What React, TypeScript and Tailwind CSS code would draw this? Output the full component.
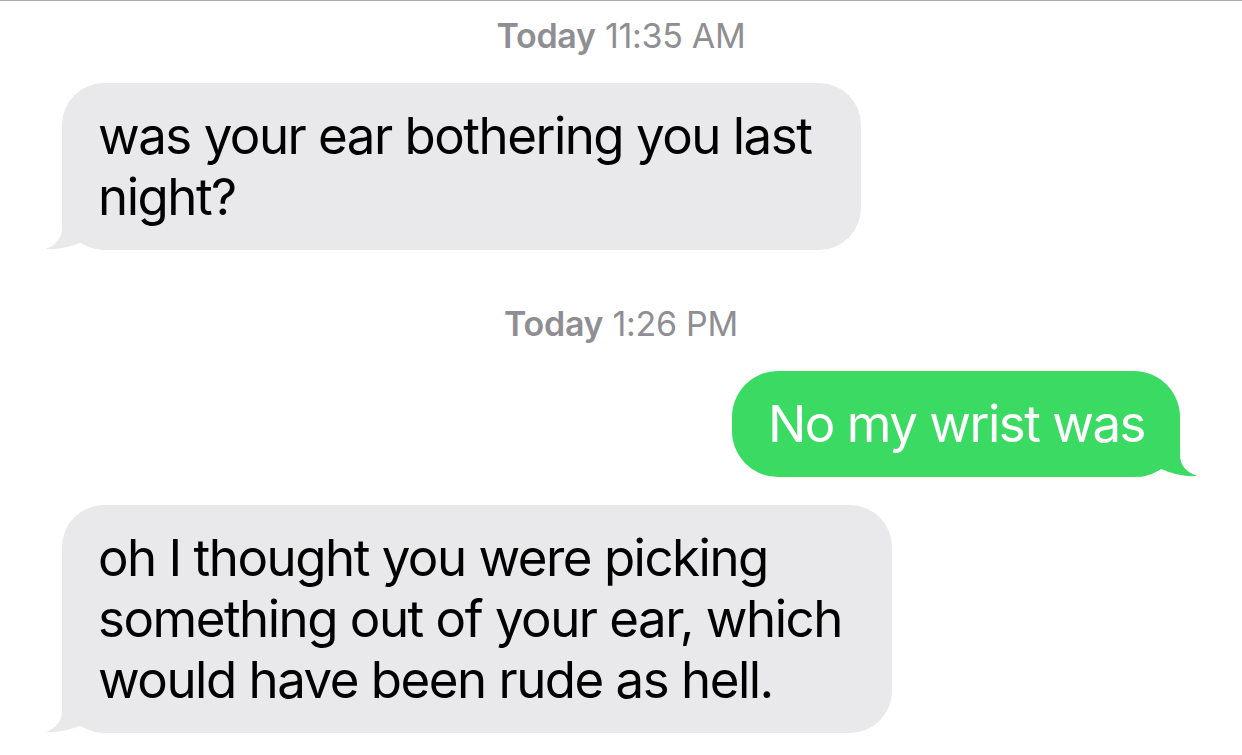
import React from "react";

function TailLeft({ color }: { color: string }) {
  return (
    <svg
      className="absolute bottom-0 left-[-16px]"
      width="60"
      height="50"
      viewBox="0 0 60 50"
    >
      <path
        d="M16 0 L16 28 C16 38 10 45 0 49 C14 50 26 46 36 42 C42 46 49 49 58 50 L58 0 Z"
        fill={color}
      />
    </svg>
  );
}

function TailRight({ color }: { color: string }) {
  return (
    <svg
      className="absolute bottom-0 right-[-17px]"
      width="60"
      height="50"
      viewBox="0 0 60 50"
    >
      <g transform="translate(60,0) scale(-1,1)">
        <path
          d="M17 0 L17 28 C17 38 11 45 0 49 C14 50 26 46 36 42 C42 46 49 49 58 50 L58 0 Z"
          fill={color}
        />
      </g>
    </svg>
  );
}

function Stamp({ time }: { time: string }) {
  return (
    <div className="h-[40px] text-center text-[34px] leading-[40px] text-[#8e8e93] tracking-[-0.3px]">
      <span className="font-semibold">Today</span> {time}
    </div>
  );
}

export default function App() {
  return (
    <div
      className="w-[1242px] h-[755px] overflow-hidden bg-white border-t border-[#a9a9a9]"
      style={{ fontFamily: "Inter, 'Liberation Sans', sans-serif" }}
    >
      <div className="flex flex-col">
        <div className="mt-[15px]">
          <Stamp time="11:35 AM" />
        </div>
        <div className="mt-[27px] pl-[62px] flex">
          <div className="relative rounded-[42px] bg-[#e9e9eb] pl-[36px] pr-[50px] pt-[22px] pb-[23px] text-[51px] leading-[61px] text-black tracking-[-1.5px]">
            <TailLeft color="#e9e9eb" />
            <div className="relative">
              was your ear bothering you last
              <br />
              night?
            </div>
          </div>
        </div>
        <div className="mt-[54px]">
          <Stamp time="1:26 PM" />
        </div>
        <div className="mt-[27px] pr-[62px] flex justify-end">
          <div className="relative rounded-[46px] bg-[#3bdb63] pl-[36px] pr-[35px] pt-[22px] pb-[23px] text-[51px] leading-[61px] text-white tracking-[-1.5px]">
            <TailRight color="#3bdb63" />
            <div className="relative">No my wrist was</div>
          </div>
        </div>
        <div className="mt-[28px] pl-[62px] flex">
          <div className="relative rounded-[42px] bg-[#e9e9eb] pl-[36px] pr-[50px] pt-[22px] pb-[23px] text-[51px] leading-[61px] text-black tracking-[-1.5px]">
            <TailLeft color="#e9e9eb" />
            <div className="relative">
              oh I thought you were picking
              <br />
              something out of your ear, which
              <br />
              would have been rude as hell.
            </div>
          </div>
        </div>
      </div>
    </div>
  );
}
